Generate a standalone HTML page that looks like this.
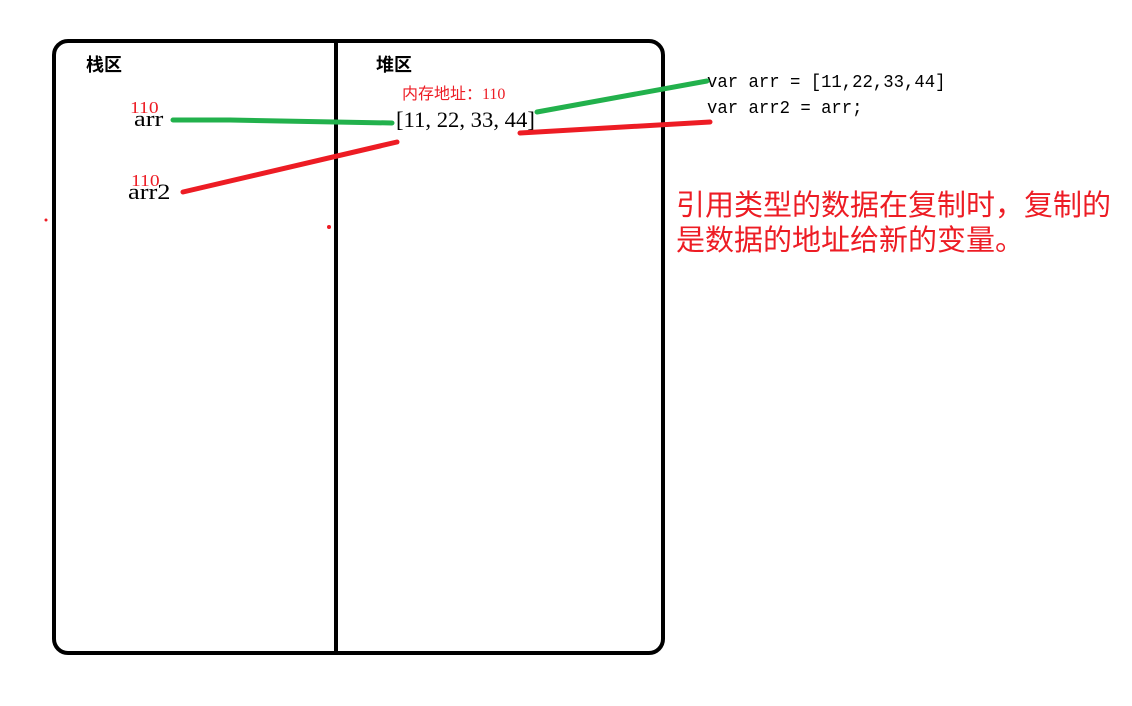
<!DOCTYPE html>
<html><head><meta charset="utf-8"><style>
body{margin:0;width:1132px;height:706px;background:#fff;position:relative;overflow:hidden;font-family:"Liberation Serif","Noto Serif CJK SC",serif}
.t{position:absolute;white-space:nowrap;line-height:1;transform-origin:0 0}
.box{position:absolute;left:52px;top:39px;width:605px;height:608px;border:4px solid #000;border-radius:16px}
.div{position:absolute;left:334px;top:41px;width:4px;height:612px;background:#000}
.r{color:#ed1c24}
</style></head><body>
<div class="box"></div><div class="div"></div>
<div class="t" style="left:86px;top:55px;font-size:18px;font-weight:bold;font-family:'Noto Sans CJK SC',sans-serif">栈区</div>
<div class="t" style="left:376px;top:55px;font-size:18px;font-weight:bold;font-family:'Noto Sans CJK SC',sans-serif">堆区</div>
<div class="t r" style="left:402px;top:87px;font-size:16px;font-family:'Liberation Serif','Noto Sans CJK SC',serif">内存地址：110</div>
<div class="t" style="left:396px;top:109px;font-size:22px;transform:scaleX(1.03)">[11,&nbsp;22,&nbsp;33,&nbsp;44]</div>
<div class="t r" style="left:130px;top:99px;font-size:17px;transform:scaleX(1.15)">110</div>
<div class="t" style="left:134px;top:108px;font-size:22px;transform:scaleX(1.2)">arr</div>
<div class="t r" style="left:131px;top:172px;font-size:17px;transform:scaleX(1.15)">110</div>
<div class="t" style="left:128px;top:181px;font-size:22px;transform:scaleX(1.2)">arr2</div>
<div class="t" style="left:707px;top:74px;font-size:18px;font-family:'Liberation Mono',monospace;transform:scaleX(0.96)">var arr = [11,22,33,44]</div>
<div class="t" style="left:707px;top:100px;font-size:18px;font-family:'Liberation Mono',monospace;transform:scaleX(0.96)">var arr2 = arr;</div>
<div class="t r" style="left:676px;top:186px;font-size:29px;line-height:35px;font-family:'Noto Sans CJK SC',sans-serif">引用类型的数据在复制时，复制的<br>是数据的地址给新的变量。</div>
<svg width="1132" height="706" style="position:absolute;left:0;top:0">
<g stroke-width="5" stroke-linecap="round" fill="none">
<path d="M173 120 L230 120 L392 123" stroke="#22b14c"/>
<path d="M537 112 L707 81" stroke="#22b14c"/>
<path d="M183 192 L397 142" stroke="#ed1c24"/>
<path d="M520 133 L710 122" stroke="#ed1c24"/>
</g>
<circle cx="329" cy="227" r="2" fill="#ed1c24"/>
<circle cx="46" cy="220" r="1.5" fill="#ed1c24"/>
</svg>
</body></html>
